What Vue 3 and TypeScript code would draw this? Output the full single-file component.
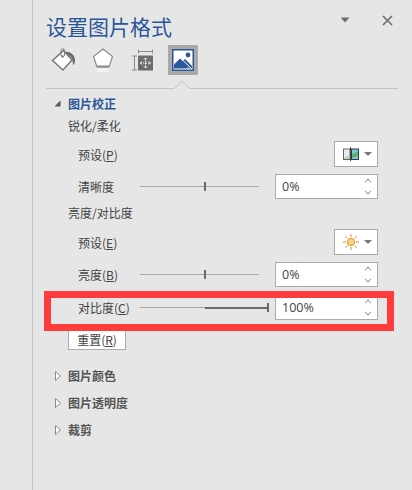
<script setup lang="ts">
const tail = ['图片颜色', '图片透明度', '裁剪']
</script>

<template>
  <div class="page">
    <div class="strip" />
    <div class="panel">
      <div class="head">
        <span class="title">设置图片格式</span>
        <svg class="menu-arrow" width="10" height="6" viewBox="0 0 10 6"><path d="M0.5 0.5h9L5 5.5z" fill="#6f6f6f" /></svg>
        <svg class="close" width="11" height="11" viewBox="0 0 11 11"><path d="M1 1l9 9M10 1l-9 9" stroke="#6f6f6f" stroke-width="1.7" fill="none" /></svg>
      </div>

      <div class="tabs">
        <svg class="tab-icon bucket" width="24" height="26" viewBox="0 0 24 26">
          <path d="M14 5C19 4 24 8 24 13c0 3-1 4.500-2 5l-.5-5C20.500 9.500 18 7.500 14 7z" fill="#6b6b6b" />
          <path d="M12.500 3.500L21 13l-9 10-10.500-9.500z" fill="#fff" stroke="#777" stroke-width="1.500" />
          <path d="M10 9V3.500a1.700 1.700 0 0 1 3.400 0V9" fill="none" stroke="#777" />
          <circle cx="11.500" cy="9.500" r="1.300" fill="#777" />
        </svg>
        <svg class="tab-icon penta" width="20" height="24" viewBox="0 0 20 24">
          <path d="M4.500 19.500L3.500 24h13l-1-4.500z" fill="#f2f2f2" />
          <path d="M10 1l9.500 7.500L16 19H4L0.500 8.500z" fill="#fff" stroke="#8a8a8a" stroke-width="1.200" />
          <path d="M4 18.500h12" stroke="#8a8a8a" stroke-width="2" />
        </svg>
        <svg class="tab-icon size" width="21" height="24" viewBox="0 0 21 24">
          <path d="M6.500 1.500v4M20.500 1.500v4M6.500 3.500h14M0 8h5M0 22h5M2.500 8v14" stroke="#8a8a8a" fill="none" />
          <rect x="6" y="7.500" width="15" height="15" fill="#6c6c6c" />
          <path d="M13.500 10v10M8.500 15h10" stroke="#fff" stroke-dasharray="1.500 1" />
          <path d="M12 11.500l1.500-1.500 1.500 1.500M12 18.500l1.500 1.500 1.500-1.500M10 13.500L8.500 15l1.500 1.500M17 13.500l1.500 1.500-1.500 1.500" stroke="#fff" fill="none" />
        </svg>
        <div class="tab-on">
          <svg width="22" height="22" viewBox="0 0 22 22">
            <rect x="0.750" y="0.750" width="20.500" height="20.500" fill="#fff" stroke="#2b579a" stroke-width="1.500" />
            <circle cx="16" cy="6" r="2.400" fill="#2b579a" />
            <path d="M2 19.500V15.500L8 9.500 14.500 15.500 16 19.500z" fill="#2b579a" />
            <path d="M10.500 12L13 10l7 7v2.500h-3z" fill="#2b579a" />
            <path d="M8.500 9l11 10.500" stroke="#fff" />
          </svg>
        </div>
        <svg class="notch" width="22" height="10" viewBox="0 0 22 10"><path d="M0 9h3l8-8 8 8h3v1H0z" fill="#e6e6e6" /><path d="M0 9.500h3.500L11 2l7.500 7.500H22" fill="none" stroke="#c3c3c3" /></svg>
      </div>

      <div class="sec-head">
        <svg width="7" height="7" viewBox="0 0 7 7"><path d="M6.500 0.500v6h-6z" fill="#555" /></svg>
        <span>图片校正</span>
      </div>

      <div class="sub m3">锐化/柔化</div>
      <div class="row m5">
        <span class="lbl">预设(<u>P</u>)</span>
        <button class="pick">
          <svg width="16" height="14" viewBox="0 0 16 14">
            <rect x="0.500" y="2" width="6.500" height="10.500" fill="#e4eef3" stroke="#666" />
            <path d="M1 11.500l3-3 2.500 2v1.500H1z" fill="#b7d6ae" />
            <rect x="8.500" y="2" width="7" height="10.500" fill="#7cc4e8" stroke="#2f3a44" />
            <path d="M9 7l6-2.500V9l-6 2z" fill="#5fae6a" />
            <path d="M7.500 0v14" stroke="#444" />
          </svg>
          <i class="caret" />
        </button>
      </div>
      <div class="row m7">
        <span class="lbl">清晰度</span>
        <div class="slider"><b class="thumb" /></div>
        <div class="spin">
          <span>0%</span>
          <div class="arrows"><i class="up" /><i class="down" /></div>
        </div>
      </div>

      <div class="sub m4">亮度/对比度</div>
      <div class="row m6">
        <span class="lbl">预设(<u>E</u>)</span>
        <button class="pick">
          <svg width="16" height="16" viewBox="0 0 16 16">
            <circle cx="8" cy="8" r="3.600" fill="#fbd48a" stroke="#ee8a1f" />
            <path d="M8 0v3M8 13v3M0 8h3M13 8h3M2.300 2.300l2.100 2.100M11.600 11.600l2.100 2.100M13.700 2.300l-2.100 2.100M4.400 11.600l-2.100 2.100" stroke="#ee8a1f" />
          </svg>
          <i class="caret" />
        </button>
      </div>
      <div class="row m7">
        <span class="lbl">亮度(<u>B</u>)</span>
        <div class="slider"><b class="thumb" /></div>
        <div class="spin">
          <span>0%</span>
          <div class="arrows"><i class="up" /><i class="down" /></div>
        </div>
      </div>
      <div class="row m8">
        <span class="lbl">对比度(<u>C</u>)</span>
        <div class="slider full"><em /><b class="thumb end" /></div>
        <div class="spin">
          <span>100%</span>
          <div class="arrows"><i class="up" /><i class="down" /></div>
        </div>
      </div>
      <button class="reset">重置(<u>R</u>)</button>

      <div class="groups">
        <div v-for="name in tail" :key="name" class="group">
          <svg width="6" height="10" viewBox="0 0 6 10"><path d="M0.500 0.500L5.500 5 0.500 9.500z" fill="#fff" stroke="#8a8a8a" /></svg>
          <span>{{ name }}</span>
        </div>
      </div>
    </div>
    <div class="mark" />
  </div>
</template>

<style>
html, body { margin: 0; background: #e6e6e6; }
</style>

<style scoped>
.page {
  position: relative;
  display: flex;
  width: 412px;
  height: 490px;
  overflow: hidden;
  background: #e6e6e6;
  color: #444;
  font: 12px "Noto Sans CJK SC", "Open Sans", sans-serif;
}
.strip {
  width: 32px;
  flex: none;
  border-right: 1px solid #c2c2c2;
}
.panel {
  flex: none;
  width: 352px;
  padding-left: 13px;
  box-sizing: border-box;
}
.head {
  display: flex;
  align-items: center;
  height: 45px;
  padding-top: 6px;
  box-sizing: border-box;
}
.title {
  font-size: 21px;
  line-height: 28px;
  color: #2b579a;
}
.menu-arrow { margin-left: auto; margin-top: -11px; }
.close { margin-left: 32px; margin-right: -8px; margin-top: -11px; }
.tabs {
  position: relative;
  display: flex;
  align-items: center;
  height: 44px;
  margin-right: -13px;
  padding-bottom: 14px;
  box-sizing: border-box;
  border-bottom: 1px solid #c3c3c3;
}
.tab-icon { flex: none; }
.bucket { margin: 0 18px 0 5px; }
.penta { margin-right: 19px; }
.size { margin-right: 15px; }
.tab-on {
  display: flex;
  align-items: center;
  justify-content: center;
  width: 30px;
  height: 30px;
  background: #a9a9a9;
}
.notch { position: absolute; left: 125px; bottom: -1px; }
.sec-head {
  display: flex;
  align-items: center;
  height: 20px;
  margin-top: 4px;
  font-weight: 700;
  color: #2b579a;
}
.sec-head svg { margin: 0 7px 0 8px; }
.sub {
  height: 20px;
  line-height: 20px;
  margin-left: 22px;
}
.row {
  display: flex;
  align-items: center;
  height: 25px;
  margin-left: 32px;
  width: 300px;
}
.m3 { margin-top: 3px; }
.m4 { margin-top: 4px; }
.m5 { margin-top: 5px; height: 26px; }
.m6 { margin-top: 6px; height: 26px; }
.m7 { margin-top: 7px; }
.m8 { margin-top: 8px; }
.lbl { flex: none; width: 62px; white-space: nowrap; }
u { text-underline-offset: 1px; }
.pick {
  display: flex;
  align-items: center;
  width: 44px;
  height: 26px;
  margin-left: auto;
  padding: 0 5px 0 8px;
  box-sizing: border-box;
  background: #fff;
  border: 1px solid #ababab;
}
.pick svg { flex: none; }
.caret {
  width: 0;
  height: 0;
  border: 4px solid transparent;
  border-top: 4px solid #7a7a7a;
  border-bottom: 0;
  margin-left: auto;
}
.slider {
  position: relative;
  flex: none;
  width: 119px;
  height: 1px;
  background: #a8a8a8;
}
.thumb {
  position: absolute;
  left: 64px;
  top: -4px;
  width: 2px;
  height: 9px;
  background: #6a6a6a;
}
.thumb.end { left: 127px; }
.full { width: 129px; }
.full em {
  position: absolute;
  left: 65px;
  right: 0;
  top: 0;
  height: 2px;
  background: #6a6a6a;
}
.spin {
  display: flex;
  align-items: center;
  justify-content: space-between;
  width: 103px;
  height: 25px;
  margin-left: auto;
  padding: 0 6px;
  box-sizing: border-box;
  background: #fff;
  border: 1px solid #ababab;
  font-family: "Open Sans", sans-serif;
  font-size: 12.5px;
  color: #444;
}
.arrows {
  display: flex;
  flex-direction: column;
  justify-content: space-between;
  height: 15px;
}
.arrows i {
  width: 5px;
  height: 5px;
  border: solid #8a8a8a;
  border-width: 1px 0 0 1px;
  transform: rotate(45deg) scale(0.8);
}
.arrows i.down { transform: rotate(225deg) scale(0.8); }
.reset {
  display: block;
  width: 58px;
  height: 22px;
  margin: 8px 0 0 22px;
  padding: 0;
  background: #fff;
  border: 1px solid #ababab;
  font: inherit;
  color: #444;
}
.groups { margin-top: 12px; }
.group {
  display: flex;
  align-items: center;
  height: 27px;
  font-weight: 700;
  color: #555;
}
.group svg { margin: 0 7px 0 9px; }
.mark {
  position: absolute;
  left: 44px;
  top: 291px;
  width: 350px;
  height: 40px;
  box-sizing: border-box;
  border: 7px solid #ff3b3b;
}
</style>
